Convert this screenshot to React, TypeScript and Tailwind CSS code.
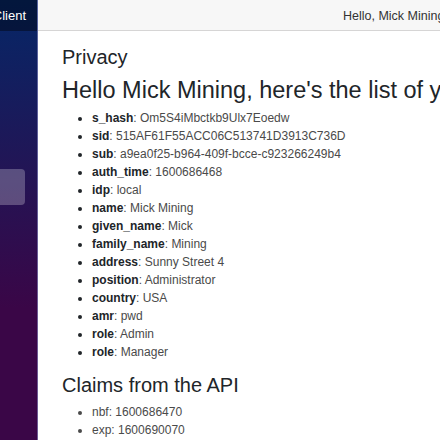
const claims: [string, string][] = [
  ['s_hash', 'Om5S4iMbctkb9Ulx7Eoedw'],
  ['sid', '515AF61F55ACC06C513741D3913C736D'],
  ['sub', 'a9ea0f25-b964-409f-bcce-c923266249b4'],
  ['auth_time', '1600686468'],
  ['idp', 'local'],
  ['name', 'Mick Mining'],
  ['given_name', 'Mick'],
  ['family_name', 'Mining'],
  ['address', 'Sunny Street 4'],
  ['position', 'Administrator'],
  ['country', 'USA'],
  ['amr', 'pwd'],
  ['role', 'Admin'],
  ['role', 'Manager'],
];

const apiClaims = ['nbf: 1600686470', 'exp: 1600690070'];

export default function App() {
  return (
    <div
      className="flex w-[440px] h-[440px] overflow-hidden bg-white"
      style={{ fontFamily: '"Liberation Sans", Arial, sans-serif' }}
    >
      {/* sidebar */}
      <aside className="w-[38px] shrink-0 flex flex-col bg-[linear-gradient(180deg,#052767_0%,#3a0647_70%)] border-r border-[#8d8fc4]/60">
        <div className="h-[31px] shrink-0 bg-black/40 flex items-center justify-end pr-[11px] overflow-hidden">
          <span className="text-[13px] text-white whitespace-nowrap">BlazorClient</span>
        </div>
        <nav className="pt-[138px] pr-[12px]">
          <div className="h-[36px] rounded-r-[4px] bg-white/25"></div>
        </nav>
      </aside>

      {/* main */}
      <div className="flex-1 min-w-0 flex flex-col">
        <header className="h-[31px] shrink-0 bg-[#f7f7f7] border-b border-[#d6d5d5] pl-[305px] pt-[3px] whitespace-nowrap">
          <span className="text-[12.5px] text-[#333]">Hello, Mick Mining</span>
        </header>

        <main className="pl-[24px] pt-[14px] whitespace-nowrap text-[#212529]">
          <h3 className="text-[20px] leading-[24px]">Privacy</h3>
          <h2 className="mt-[7px] text-[23.5px] leading-[28px]">
            Hello Mick Mining, here's the list of your claims:
          </h2>
          <ul className="mt-[5px] list-disc pl-[30px] text-[12px] leading-[18px]">
            {claims.map(([k, v], i) => (
              <li key={i}>
                <strong className="font-bold text-[#212529]">{k}</strong>
                <span className="text-[#4a4a4a]">: {v}</span>
              </li>
            ))}
          </ul>
          <h3 className="mt-[12px] text-[20px] leading-[24px]">Claims from the API</h3>
          <ul className="mt-[6px] list-disc pl-[30px] text-[12px] leading-[18px] text-[#4a4a4a]">
            {apiClaims.map((c) => (
              <li key={c}>{c}</li>
            ))}
          </ul>
        </main>
      </div>
    </div>
  );
}
